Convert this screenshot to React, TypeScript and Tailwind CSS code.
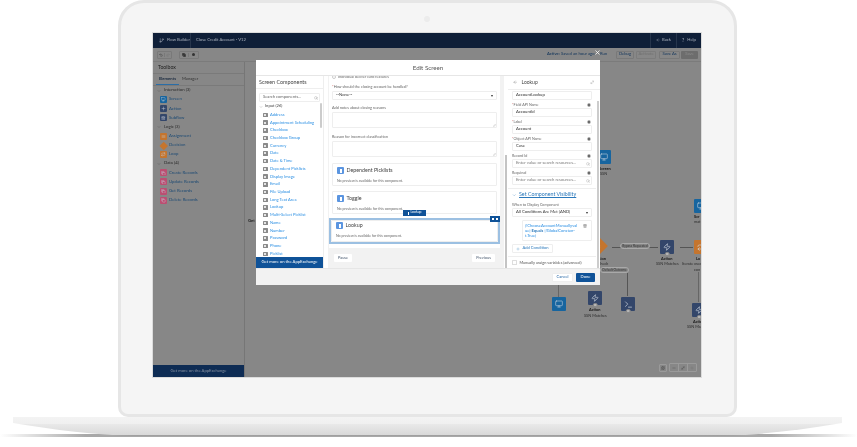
import React from "react";
import { Zap, Terminal, Monitor, Search, ArrowLeft, ChevronDown, Undo2, Redo2, Copy, Plus, Minus, Info, X, Repeat, GitBranch, Equal, MoveDiagonal, Trash2, Map as MapIcon } from "lucide-react";

const components = ["Address","Appointment Scheduling","Checkbox","Checkbox Group","Currency","Date","Date & Time","Dependent Picklists","Display Image","Email","File Upload","Long Text Area","Lookup","Multi-Select Picklist","Name","Number","Password","Phone","Picklist"];

function ToolGroup({ label }: { label: string }) {
  return (
    <div className="flex h-[9.15px] items-center pl-[4px] text-[4.3px] text-[#2a2a2a]">
      <ChevronDown className="mr-[3px] h-[4px] w-[4px]" strokeWidth={1.2} />
      {label}
    </div>
  );
}

function ToolItem({ label, color, icon }: { label: string; color: string; icon: React.ReactNode }) {
  return (
    <div className="flex h-[9.15px] items-center pl-[7px] text-[4.3px] text-[#1c4a74]">
      <span className={`mr-[2px] flex h-[7px] w-[7px] items-center justify-center rounded-[1px] text-[#c9d0da] ${color}`}>{icon}</span>
      {label}
    </div>
  );
}

function Input({ value, search }: { value: string; search?: boolean }) {
  return (
    <div className={`flex h-[9px] items-center justify-between rounded-[1px] border border-[#eeeeee] bg-white pl-[3px] pr-[1px] text-[4.2px] ${search ? "text-[#777]" : "text-[#333]"}`}>
      {value}
      {search && <Search className="h-[4px] w-[4px] text-[#666]" strokeWidth={1.3} />}
    </div>
  );
}

function Field({ label, req, value, search }: { label: string; req?: boolean; value: string; search?: boolean }) {
  return (
    <div className="flex flex-col">
      <div className="flex h-[8px] items-center justify-between pr-[1px] pt-px text-[3.7px] text-[#666]">
        <span>{req && <span className="text-[#c23934]">*</span>}{label}</span>
        <Info className="h-[4px] w-[4px] fill-[#555] text-white" strokeWidth={1.5} />
      </div>
      <Input value={value} search={search} />
    </div>
  );
}

function PreviewCard({ title, selected }: { title: string; selected?: boolean }) {
  return (
    <div className={`flex flex-col rounded-[1px] border border-[#eeeeee] bg-white px-[4px] ${selected ? "h-[22px] pt-[1px]" : "h-[23px] pt-[3px]"}`}>
      <div className="flex items-center gap-[2.5px] text-[5.3px] text-[#444]">
        <span className="flex h-[7px] w-[7px] items-center justify-center rounded-[1px] bg-[#5b95e0]">
          <span className="h-[3.5px] w-[2px] bg-white" />
        </span>
        {title}
      </div>
      <div className="mt-[4px] text-[3.5px] text-[#666]">No preview is available for this component.</div>
    </div>
  );
}

function Node({ cls, children }: { cls: string; children: React.ReactNode }) {
  return (
    <div className={`absolute flex h-[14px] w-[14px] items-center justify-center rounded-[1px] text-[#d5dbe4] ${cls}`}>
      {children}
    </div>
  );
}

function NodeDot() {
  return <span className="absolute -bottom-[2px] left-1/2 h-[4.5px] w-[4.5px] -translate-x-1/2 rounded-full border border-[#878787] bg-[#b5b5b5]" />;
}

function Cap({ cls, bold, children }: { cls: string; bold?: boolean; children: React.ReactNode }) {
  return <div className={`absolute whitespace-nowrap text-center text-[3.9px] leading-none ${bold ? "font-bold text-[#151515]" : "text-[#2c2c2c]"} ${cls}`}>{children}</div>;
}

function Pill({ cls, children }: { cls: string; children: React.ReactNode }) {
  return <div className={`absolute flex h-[6px] items-center justify-center rounded-full border border-[#a9a9a9] text-[3.2px] text-[#333] ${cls}`}>{children}</div>;
}

function Canvas() {
  return (
    <div className="relative flex-1 overflow-hidden">
      <div className="absolute left-[3px] top-[156px] text-[4.2px] font-bold text-[#222]">Get</div>
      <Node cls="left-[352px] top-[88px] bg-[#17659f]"><Monitor className="h-[8px] w-[8px]" strokeWidth={1.6} /></Node>
      <Cap cls="left-[354px] top-[105px]" bold>Screen</Cap>
      <Cap cls="left-[355px] top-[110px]">SSN</Cap>
      <Node cls="left-[449px] top-[137px] bg-[#17659f]"><Monitor className="h-[8px] w-[8px]" strokeWidth={1.6} /></Node>
      <Cap cls="left-[449px] top-[153px]" bold>Scr</Cap>
      <Cap cls="left-[449px] top-[158px]">mat</Cap>

      <div className="absolute left-[346px] top-[177px] h-[14px] w-[14px] rotate-45 bg-[#c5752e]" />
      <div className="absolute left-[350px] top-[180px] flex h-[8px] w-[6px] items-center justify-center text-[#e8d2bd]"><Equal className="h-[7px] w-[7px]" strokeWidth={2} /></div>
      <Cap cls="left-[346px] top-[195px]" bold>Decision</Cap>
      <Cap cls="left-[344px] top-[200px]">SSN-Check</Cap>

      <div className="absolute left-[367px] top-[184.5px] h-px w-[46px] bg-[#555]" />
      <Pill cls="left-[375px] top-[181px] w-[30px] bg-[#878787]">Bypass Requested</Pill>
      <Node cls="left-[415px] top-[178px] bg-[#33466a]"><Zap className="h-[8px] w-[8px]" strokeWidth={1.8} /><NodeDot /></Node>
      <Cap cls="left-[416px] top-[195px]" bold>Action</Cap>
      <Cap cls="left-[411px] top-[200px]">SSN Matches</Cap>
      <div className="absolute left-[435px] top-[184.5px] h-px w-[13px] bg-[#555]" />
      <Node cls="left-[449px] top-[178px] bg-[#c5752e]"><Repeat className="h-[8px] w-[8px]" strokeWidth={1.8} /></Node>
      <Cap cls="left-[451px] top-[195px]" bold>Lo</Cap>
      <Cap cls="left-[437px] top-[200px]">Iterate over</Cap>
      <Cap cls="left-[449px] top-[206px]">con</Cap>
      <div className="absolute left-[453px] top-[210px] h-[30px] w-px bg-[#666]" />

      <Pill cls="left-[355px] top-[205px] w-[29px]">Default Outcome</Pill>
      <div className="absolute left-[382px] top-[211px] h-[23px] w-px bg-[#555]" />
      <Node cls="left-[376px] top-[235px] bg-[#33466a]"><Terminal className="h-[9px] w-[9px]" strokeWidth={1.8} /><NodeDot /></Node>
      <Node cls="left-[343px] top-[229px] bg-[#33466a]"><Zap className="h-[8px] w-[8px]" strokeWidth={1.8} /><NodeDot /></Node>
      <Cap cls="left-[344px] top-[246px]" bold>Action</Cap>
      <Cap cls="left-[339px] top-[252px]">SSN Matches</Cap>
      <div className="absolute left-[313px] top-[223px] h-[12px] w-px bg-[#666]" />
      <Node cls="left-[307px] top-[235px] bg-[#17659f]"><Monitor className="h-[8px] w-[8px]" strokeWidth={1.6} /></Node>
      <Node cls="left-[447px] top-[241px] bg-[#33466a]"><Zap className="h-[8px] w-[8px]" strokeWidth={1.8} /><NodeDot /></Node>
      <Cap cls="left-[448px] top-[258px]" bold>Actio</Cap>
      <Cap cls="left-[442px] top-[263px]">SSN Ma</Cap>

      <div className="absolute bottom-[5px] left-[414px] flex items-center gap-[2px] text-[#444]">
        <span className="flex h-[8px] w-[8px] items-center justify-center rounded-[1px] border border-[#9a9a9a]"><MapIcon className="h-[4px] w-[4px]" /></span>
        <div className="flex rounded-[1px] border border-[#9a9a9a]">
          <span className="flex h-[7px] w-[9px] items-center justify-center border-r border-[#9a9a9a]"><Minus className="h-[4px] w-[4px]" /></span>
          <span className="flex h-[7px] w-[9px] items-center justify-center border-r border-[#9a9a9a]"><MoveDiagonal className="h-[4px] w-[4px]" /></span>
          <span className="flex h-[7px] w-[8px] items-center justify-center text-[#777]"><Plus className="h-[4px] w-[4px]" /></span>
        </div>
      </div>
    </div>
  );
}

function Toolbox() {
  return (
    <aside className="flex w-[92px] flex-col border-r border-[#767676]">
      <div className="flex h-[12px] items-center border-b border-[#7a7a7a] pl-[5px] text-[5.2px] text-[#222]">Toolbox</div>
      <div className="flex h-[12px] items-center gap-[3px] border-b border-[#7a7a7a] pl-[3px] text-[4.2px]">
        <span className="relative flex h-full w-[23px] items-center justify-center border-b-[1.5px] border-[#2a6ea8] font-bold text-[#1b2b40]">Elements</span>
        <span className="text-[#333]">Manager</span>
      </div>
      <ToolGroup label="Interaction (3)" />
      <ToolItem label="Screen" color="bg-[#17659f]" icon={<Monitor className="h-[4.5px] w-[4.5px]" />} />
      <ToolItem label="Action" color="bg-[#33466a]" icon={<Plus className="h-[5px] w-[5px]" />} />
      <ToolItem label="Subflow" color="bg-[#33466a]" icon={<Trash2 className="h-[4.5px] w-[4.5px]" />} />
      <ToolGroup label="Logic (3)" />
      <ToolItem label="Assignment" color="bg-[#c5752e]" icon={<Equal className="h-[5px] w-[5px]" />} />
      <div className="flex h-[9.15px] items-center pl-[7px] text-[4.3px] text-[#1c4a74]">
        <span className="mr-[2px] ml-[1px] h-[5.5px] w-[5.5px] rotate-45 bg-[#c5752e]" />
        <span className="ml-[0.5px]">Decision</span>
      </div>
      <ToolItem label="Loop" color="bg-[#c5752e]" icon={<Repeat className="h-[4.5px] w-[4.5px]" />} />
      <ToolGroup label="Data (4)" />
      <ToolItem label="Create Records" color="bg-[#bb4f72]" icon={<Copy className="h-[4.5px] w-[4.5px]" />} />
      <ToolItem label="Update Records" color="bg-[#bb4f72]" icon={<Copy className="h-[4.5px] w-[4.5px]" />} />
      <ToolItem label="Get Records" color="bg-[#bb4f72]" icon={<Copy className="h-[4.5px] w-[4.5px]" />} />
      <ToolItem label="Delete Records" color="bg-[#bb4f72]" icon={<Copy className="h-[4.5px] w-[4.5px]" />} />
      <div className="flex-1" />
      <div className="flex h-[12px] items-center justify-center bg-[#0e2c54] text-[4.2px] text-[#8590a0]">Get more on the AppExchange</div>
    </aside>
  );
}

function TextArea({ h }: { h: string }) {
  return (
    <div className="relative rounded-[1px] border border-[#eeeeee] bg-white">
      <div className={h} />
      <MoveDiagonal className="absolute bottom-0 right-0 h-[3px] w-[3px] text-[#888]" strokeWidth={1.5} />
    </div>
  );
}

function ComponentList() {
  return (
    <div className="flex w-[68px] flex-col border-r border-[#eeeeee] bg-white">
      <div className="flex h-[13px] shrink-0 items-center border-b border-[#eeeeee] pl-[3px] pt-[1px] text-[5.4px] text-[#444]">Screen Components</div>
      <div className="relative flex-1 overflow-hidden">
        <div className="mx-[3px] mt-[4px] flex h-[9px] w-[61px] items-center justify-between rounded-[1px] border border-[#eeeeee] pl-[3px] pr-[1px] text-[4.1px] text-[#666]">
          Search components...
          <Search className="h-[4px] w-[4px] text-[#666]" strokeWidth={1.4} />
        </div>
        <div className="flex h-[8px] items-center pl-[3px] pt-[1px] text-[4.1px] text-[#444]">
          <ChevronDown className="mr-[2px] h-[4px] w-[4px]" strokeWidth={1.2} />
          Input (26)
        </div>
        <div className="flex flex-col pt-[1px]">
          {components.map((c) => (
            <div key={c} className="flex h-[7.72px] items-center gap-[2.5px] pl-[7px] text-[4.1px] text-[#2b8fe3]">
              <span className="flex h-[4.5px] w-[4.5px] shrink-0 items-center justify-center rounded-[0.5px] bg-[#8a8a8a]"><span className="h-[2px] w-[2px] bg-[#e5e5e5]" /></span>
              {c}
            </div>
          ))}
        </div>
        <div className="absolute right-[1px] top-[14px] h-[25px] w-[2px] rounded-full bg-[#cccccc]" />
      </div>
      <div className="flex h-[11px] shrink-0 items-center justify-center bg-[#0f5298] text-[4.2px] text-white">Get more on the AppExchange</div>
    </div>
  );
}

function ScreenCenter() {
  return (
    <div className="relative ml-[4px] flex w-[176px] flex-col bg-[#f2f2f2]">
      <div className="relative ml-px flex h-[172px] w-[171px] flex-col bg-white">
        <div className="flex h-[3px] items-end overflow-hidden pl-[3px] text-[3.8px] leading-none text-[#666]">
          <span className="mr-[2px] h-[4px] w-[4px] shrink-0 rounded-full border border-[#ccc]" />
          Individual deliver card features
        </div>
        <div className="flex h-[12px] items-end pb-[1.5px] pl-[3px] text-[3.8px] text-[#666]"><span className="text-[#c23934]">*</span>How should the closing account be handled?</div>
        <div className="mx-[3px] flex h-[9px] items-center justify-between rounded-[1px] border border-[#eeeeee] px-[3px] text-[4.2px] text-[#333]">
          --None--
          <span className="h-0 w-0 border-x-[1.5px] border-t-[2px] border-x-transparent border-t-[#333]" />
        </div>
        <div className="flex h-[12px] items-end pb-[1px] pl-[3px] text-[3.8px] text-[#666]">Add notes about closing reasons</div>
        <div className="mx-[3px]"><TextArea h="h-[14px]" /></div>
        <div className="flex h-[13px] items-end pb-[1px] pl-[3px] text-[3.8px] text-[#666]">Reason for incorrect classification</div>
        <div className="mx-[3px]"><TextArea h="h-[14px]" /></div>
        <div className="mx-[3px] mt-[6px] flex flex-col gap-[5px]">
          <PreviewCard title="Dependent Picklists" />
          <PreviewCard title="Toggle" />
        </div>
        <div className="mt-[4px] h-[26px] w-[171px] border-2 border-[#9cc0e2]">
          <PreviewCard title="Lookup" selected />
        </div>
        <div className="absolute left-[74px] top-[134px] flex h-[6px] w-[23px] items-center justify-center gap-[1.5px] bg-[#0f5298] text-[3.4px] text-white">
          <span className="h-[3px] w-[1.5px] bg-white" />Lookup
        </div>
        <div className="absolute right-0 top-[140px] flex h-[5.5px] w-[10px] items-center justify-center gap-[1.5px] bg-[#0f5298]">
          <span className="h-[2.5px] w-[2.5px] bg-white" /><span className="h-[2.5px] w-[2.5px] bg-white" />
        </div>
      </div>
      <div className="flex flex-1 items-center justify-between pl-[6px] pr-[9px] text-[3.9px] text-[#44566c]">
        <span className="flex h-[8px] w-[18px] items-center justify-center rounded-[1px] bg-white">Pause</span>
        <span className="flex h-[8px] w-[23px] items-center justify-center rounded-[1px] bg-white">Previous</span>
      </div>
      <div className="absolute bottom-0 right-[-3px] h-[113px] w-[2px] bg-[#c4c4c4]" />
    </div>
  );
}

function PropertyPanel() {
  return (
    <div className="ml-[4px] flex w-[92px] flex-col overflow-hidden bg-white">
      <div className="flex h-[14px] shrink-0 items-center justify-between border-b border-[#eeeeee] pl-[5px] pr-[6px] text-[5px] text-[#444]">
        <span className="flex items-center gap-[4px]"><ArrowLeft className="h-[4.5px] w-[4.5px]" strokeWidth={1.3} />Lookup</span>
        <MoveDiagonal className="h-[4.5px] w-[4.5px] text-[#777]" strokeWidth={1.3} />
      </div>
      <div className="relative flex-1">
        <div className="ml-[4px] w-[80px]">
          <div className="pt-px"><Input value="AccountLookup" /></div>
          <Field req label="Field API Name" value="AccountId" />
          <Field req label="Label" value="Account" />
          <Field req label="Object API Name" value="Case" />
          <Field label="Record Id" value="Enter value or search resources..." search />
          <Field label="Required" value="Enter value or search resources..." search />
        </div>
        <div className="mt-[3px] w-[88px] border-t border-[#eeeeee] pl-[4px]">
          <div className="flex h-[12px] items-center gap-[2.5px] text-[5.3px] text-[#2a78bb]">
            <ChevronDown className="h-[4.5px] w-[4.5px]" strokeWidth={1.6} />
            <span className="underline">Set Component Visibility</span>
          </div>
          <div className="flex h-[7px] items-end pb-[0.5px] text-[3.7px] text-[#666]">When to Display Component</div>
          <div className="flex h-[9px] w-[80px] items-center justify-between rounded-[1px] border border-[#eeeeee] px-[3px] text-[4.2px] text-[#333]">
            All Conditions Are Met (AND)
            <span className="h-0 w-0 border-x-[1.5px] border-t-[2px] border-x-transparent border-t-[#333]" />
          </div>
          <div className="ml-[10px] mt-[3px] flex h-[21px] w-[70px] justify-between rounded-[1px] border border-[#eeeeee] pl-[2px] pr-[4px] pt-[1.5px] text-[4.1px] leading-[5.4px] text-[#2b8fe3]">
            <span>{"{!ChooseAccountManuallyval"}<br />{"ue} "}<b className="text-[#2a78bb]">Equals</b>{" {!GlobalConstan-"}<br />{"t.True}"}</span>
            <Trash2 className="mt-[1px] h-[4px] w-[4px] shrink-0 text-[#555]" />
          </div>
          <div className="mt-[3px] flex h-[9px] w-[41px] items-center justify-center gap-[2px] rounded-[1px] border border-[#eeeeee] text-[4.1px] text-[#2a78bb]">
            <Plus className="h-[4px] w-[4px]" strokeWidth={1.6} />Add Condition
          </div>
        </div>
        <div className="mt-[3px] flex h-[12px] w-[88px] items-center gap-[3px] border-t border-[#eeeeee] pl-[4px] text-[3.9px] text-[#555]">
          <span className="h-[4.5px] w-[4.5px] rounded-[0.5px] border border-[#ddd]" />
          Manually assign variables (advanced)
        </div>
        <div className="absolute bottom-0 right-[1px] h-[167px] w-[2px] bg-[#cccccc]" />
      </div>
    </div>
  );
}

function Modal() {
  return (
    <div className="absolute left-[103px] top-[27px] z-10 flex h-[225px] w-[344px] flex-col bg-white">
      <div className="flex h-[16px] shrink-0 items-center justify-center border-b border-[#e6e6e6] text-[6.2px] text-[#555]">Edit Screen</div>
      <div className="flex h-[192px] shrink-0">
        <ComponentList />
        <ScreenCenter />
        <PropertyPanel />
      </div>
      <div className="flex flex-1 items-center justify-end gap-[3px] border-t border-[#e6e6e6] bg-[#f2f2f2] pr-[5px] text-[4.1px]">
        <span className="flex h-[9px] w-[21px] items-center justify-center rounded-[1px] border border-[#eeeeee] bg-white text-[#2a6aa8]">Cancel</span>
        <span className="flex h-[9px] w-[19px] items-center justify-center rounded-[1px] bg-[#0f5298] text-white">Done</span>
      </div>
      <X className="absolute -top-[11px] right-[-1px] h-[7px] w-[7px] text-white" strokeWidth={2.5} />
    </div>
  );
}

function AppScreen() {
  return (
    <div className="relative flex h-[346px] w-[550px] flex-col overflow-hidden border border-[#dcdcdc] bg-[#878787] blur-[0.5px]">
      <header className="flex h-[15px] shrink-0 items-center bg-[#0f1f38] text-[4.2px] text-[#aab1bd]">
        <GitBranch className="ml-[6px] mr-[3px] h-[5px] w-[5px]" />
        <span className="w-[21px] whitespace-nowrap">Flow Builder</span>
        <span className="mx-[2px] h-full w-px bg-[#26354c]" />
        <span className="ml-[3px] flex-1">Close Credit Account - V12</span>
        <span className="h-full w-px bg-[#26354c]" />
        <span className="flex w-[25px] items-center justify-center gap-[2px]"><ArrowLeft className="h-[4px] w-[4px]" />Back</span>
        <span className="h-full w-px bg-[#26354c]" />
        <span className="flex w-[24px] items-center justify-center gap-[3px]"><span className="text-[5px]">?</span>Help</span>
      </header>
      <div className="flex h-[14px] shrink-0 items-center border-b border-[#7b7b7b] pl-[4px] text-[4.2px]">
        <div className="flex h-[8px] items-center rounded-[1px] border border-[#797979]">
          <span className="flex w-[7px] justify-center border-r border-[#797979]"><Undo2 className="h-[4px] w-[4px] text-[#333]" /></span>
          <span className="flex w-[6px] justify-center"><Redo2 className="h-[4px] w-[4px] text-[#777]" /></span>
        </div>
        <div className="ml-[7px] flex h-[8px] items-center rounded-[1px] border border-[#797979]">
          <span className="flex w-[9px] justify-center border-r border-[#797979]"><Copy className="h-[4px] w-[4px] fill-[#333] text-[#333]" /></span>
          <span className="flex w-[9px] justify-center"><span className="h-[3.5px] w-[3.5px] rounded-full bg-[#333]" /></span>
        </div>
        <div className="flex-1" />
        <span className="w-[53px] whitespace-nowrap text-[#12355b]"><span className="font-semibold">Active:</span> Saved an hour ago</span>
        <span className="w-[16px] text-[#12355b]">Run</span>
        <span className="flex h-[8px] w-[18px] items-center justify-center rounded-[1px] border border-[#797979] text-[#12355b]">Debug</span>
        <span className="ml-[2px] flex h-[8px] w-[20px] items-center justify-center rounded-[1px] border border-[#7c7c7c] text-[#6f6f6f]">Activate</span>
        <span className="ml-[3px] flex h-[8px] w-[21px] items-center justify-center rounded-[1px] border border-[#797979] text-[#12355b]">Save As</span>
        <span className="ml-[1px] mr-[3px] flex h-[8px] w-[17px] items-center justify-center rounded-[1px] bg-[#6d6d6d] text-[#8d8d8d]">Save</span>
      </div>
      <div className="flex flex-1 overflow-hidden">
        <Toolbox />
        <Canvas />
      </div>
      <Modal />
    </div>
  );
}

export default function App() {
  return (
    <div className="h-[447px] w-[857px] overflow-hidden bg-white [font-family:Lato,'Liberation_Sans',sans-serif]">
      <div className="relative ml-[118px] h-[417px] w-[619px] rounded-t-[26px] rounded-b-[10px] border-[3px] border-[#e6e6e6] bg-[#f5f5f5] pl-[31px] pt-[29px]">
        <span className="absolute left-[303px] top-[13px] h-[6px] w-[6px] rounded-full bg-[#ececec]" />
        <AppScreen />
      </div>
      <svg className="-mt-[1px] block" width="857" height="24" viewBox="0 0 857 24">
        <defs>
          <linearGradient id="base" x1="0" y1="0" x2="0" y2="1">
            <stop offset="0" stopColor="#f3f3f3" />
            <stop offset="0.36" stopColor="#f0f0f0" />
            <stop offset="0.37" stopColor="#e9e9e9" />
            <stop offset="0.93" stopColor="#d9d9d9" />
            <stop offset="1" stopColor="#7d7d7d" />
          </linearGradient>
          <linearGradient id="shade" x1="0" y1="0" x2="1" y2="0">
            <stop offset="0" stopColor="#ffffff" />
            <stop offset="0.1" stopColor="#a8a8a8" />
            <stop offset="0.9" stopColor="#a8a8a8" />
            <stop offset="1" stopColor="#ffffff" />
          </linearGradient>
        </defs>
        <rect x="0" y="18" width="857" height="3" fill="url(#shade)" />
        <path d="M13 1 L842 1 L842 7 C800 14 760 19 720 20 L135 20 C95 19 55 14 13 7 Z" fill="url(#base)" />
      </svg>
    </div>
  );
}
